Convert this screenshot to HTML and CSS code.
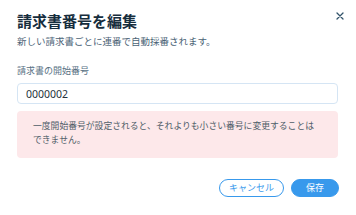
FILE: index.html
```html
<!DOCTYPE html>
<html lang="ja">
<head>
  <meta charset="UTF-8" />
  <title>請求書番号を編集</title>
  <meta name="viewport" content="width=device-width, initial-scale=1.0" />
  <link rel="stylesheet" href="styles.css">
</head>
<body>

  <div class="modal">
    <div class="modal-header">
      <div>
        <h1 class="titulo">請求書番号を編集</h1>
        <p class="subtitulo">新しい請求書ごとに連番で自動採番されます。</p>
      </div>
      <button class="btn-cerrar" aria-label="閉じる">
        <svg width="8" height="8" viewBox="0 0 8 8">
          <path d="M1 1 L7 7 M7 1 L1 7" stroke="#32536a" stroke-width="1.3" stroke-linecap="round" />
        </svg>
      </button>
    </div>

    <label class="campo-label" for="numeroInicio">請求書の開始番号</label>
    <input type="text" id="numeroInicio" class="campo-input" value="0000002" />

    <div class="aviso">
      一度開始番号が設定されると、それよりも小さい番号に変更することはできません。
    </div>

    <div class="modal-footer">
      <button class="btn btn-secundario">キャンセル</button>
      <button class="btn btn-primario">保存</button>
    </div>
  </div>

</body>
</html>
```

FILE: styles.css
```css
* {
  box-sizing: border-box;
}

body {
  margin: 0;
  background: #ffffff;
  font-family: "Noto Sans", "Noto Sans CJK JP", sans-serif;
  color: #162d3d;
}

.modal {
  width: 356px;
  padding: 11px 18px 18px 17px;
}

.modal-header {
  display: flex;
  justify-content: space-between;
  align-items: flex-start;
}

.titulo {
  margin: 0;
  font-size: 15px;
  line-height: 20px;
  font-weight: bold;
  color: #162d3d;
}

.subtitulo {
  margin: 5px 0 0;
  font-size: 9.5px;
  line-height: 12px;
  color: #4a6275;
}

.btn-cerrar {
  border: none;
  background: none;
  padding: 0;
  margin: 1px -6px 0 0;
  width: 8px;
  height: 8px;
  line-height: 0;
  cursor: pointer;
}

.campo-label {
  display: block;
  margin-top: 16px;
  font-size: 9px;
  line-height: 13px;
  color: #577083;
}

.campo-input {
  display: block;
  width: 100%;
  height: 21px;
  margin-top: 6px;
  padding: 0 8px;
  border: 1px solid #d5e5f4;
  border-radius: 4px;
  font-family: "Noto Sans", "Noto Sans CJK JP", sans-serif;
  font-size: 10.5px;
  color: #26323b;
  outline: none;
}

.aviso {
  margin-top: 7px;
  padding: 9px 16px 11px;
  background: #fde8ea;
  border-radius: 4px;
  font-size: 8.8px;
  line-height: 13.5px;
  color: #4f5d68;
}

.modal-footer {
  display: flex;
  justify-content: flex-end;
  gap: 7px;
  margin-top: 21px;
  margin-right: -1px;
}

.btn {
  height: 18px;
  border-radius: 9px;
  font-family: "Noto Sans", "Noto Sans CJK JP", sans-serif;
  font-size: 9px;
  line-height: 16px;
  cursor: pointer;
}

.btn-secundario {
  padding: 0 9px;
  border: 1px solid #3899ec;
  background: #ffffff;
  color: #3899ec;
}

.btn-primario {
  padding: 0 14px;
  border: 1px solid #3899ec;
  background: #3899ec;
  color: #ffffff;
}
```
